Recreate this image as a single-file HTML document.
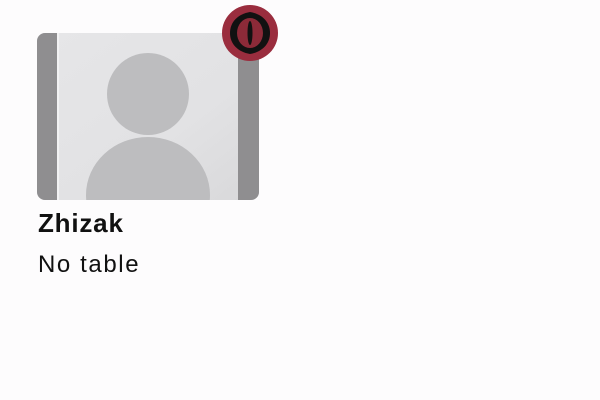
<!DOCTYPE html>
<html><head><style>
body{margin:0;width:600px;height:400px;background:#fdfcfd;position:relative;overflow:hidden;font-family:"Liberation Sans",sans-serif;color:#111}
.t1{position:absolute;left:38px;top:208px;font-size:26px;font-weight:bold;letter-spacing:0.8px}
.t2{position:absolute;left:38px;top:251px;font-size:24px;letter-spacing:1.6px}
</style></head><body>
<svg width="600" height="400" style="position:absolute;left:0;top:0">
<defs>
<clipPath id="c"><rect x="37" y="33" width="222" height="167" rx="8"/></clipPath>
<linearGradient id="g" x1="0" y1="0" x2="1" y2="1"><stop offset="0" stop-color="#e6e6e8"/><stop offset="0.6" stop-color="#e2e2e4"/><stop offset="1" stop-color="#d8d8da"/></linearGradient>
</defs>
<g clip-path="url(#c)">
<rect x="37" y="33" width="222" height="167" fill="url(#g)"/>
<rect x="37" y="33" width="20" height="167" fill="#8f8e90"/>
<rect x="57" y="33" width="2" height="167" fill="#f2f2f3"/>
<rect x="238" y="33" width="21" height="167" fill="#8f8e90"/>
<circle cx="148" cy="94" r="41" fill="#bdbdbf"/>
<ellipse cx="148" cy="195" rx="62" ry="58" fill="#bdbdbf"/>
</g>
<circle cx="250" cy="33" r="28" fill="#9a2d3e"/>
<path d="M250 12 C262 14 270 22 270 33 C270 44 262 52 250 54 C238 52 230 44 230 33 C230 22 238 14 250 12Z" fill="#111"/>
<ellipse cx="250" cy="33" rx="13" ry="15" fill="#8c2a38"/>
<ellipse cx="250" cy="33" rx="2.5" ry="12" fill="#111"/>
</svg>
<div class="t1">Zhizak</div>
<div class="t2">No table</div>
</body></html>
